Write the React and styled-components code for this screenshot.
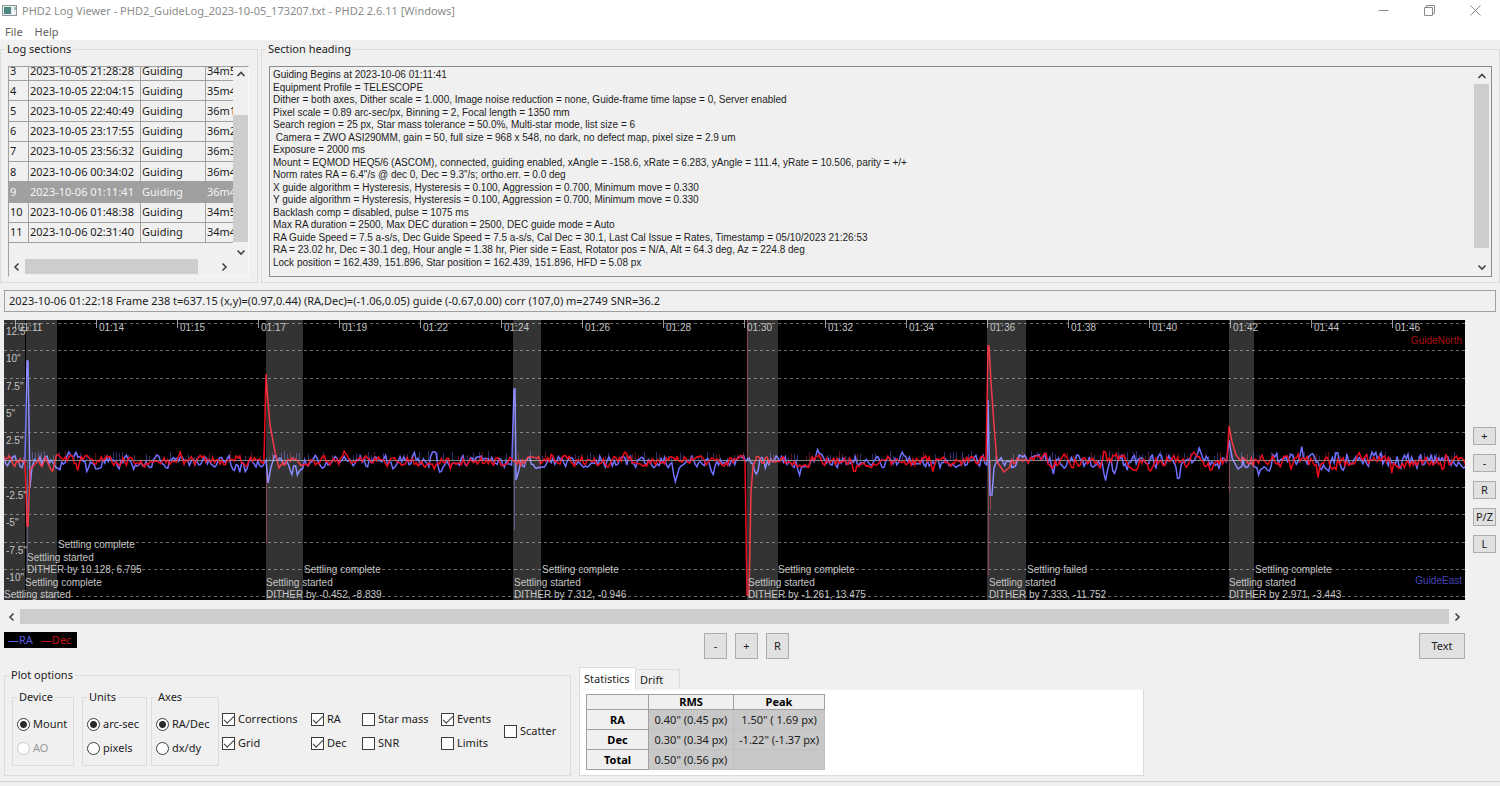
import styled, { createGlobalStyle } from 'styled-components';

const sections = [
    ['3', '2023-10-05 21:28:28', '34m5s'],
    ['4', '2023-10-05 22:04:15', '35m4s'],
    ['5', '2023-10-05 22:40:49', '36m1s'],
    ['6', '2023-10-05 23:17:55', '36m2s'],
    ['7', '2023-10-05 23:56:32', '36m3s'],
    ['8', '2023-10-06 00:34:02', '36m4s'],
    ['9', '2023-10-06 01:11:41', '36m4s'],
    ['10', '2023-10-06 01:48:38', '34m5s'],
    ['11', '2023-10-06 02:31:40', '34m4s'],
];

const heading = `Guiding Begins at 2023-10-06 01:11:41
Equipment Profile = TELESCOPE
Dither = both axes, Dither scale = 1.000, Image noise reduction = none, Guide-frame time lapse = 0, Server enabled
Pixel scale = 0.89 arc-sec/px, Binning = 2, Focal length = 1350 mm
Search region = 25 px, Star mass tolerance = 50.0%, Multi-star mode, list size = 6
 Camera = ZWO ASI290MM, gain = 50, full size = 968 x 548, no dark, no defect map, pixel size = 2.9 um
Exposure = 2000 ms
Mount = EQMOD HEQ5/6 (ASCOM), connected, guiding enabled, xAngle = -158.6, xRate = 6.283, yAngle = 111.4, yRate = 10.506, parity = +/+
Norm rates RA = 6.4"/s @ dec 0, Dec = 9.3"/s; ortho.err. = 0.0 deg
X guide algorithm = Hysteresis, Hysteresis = 0.100, Aggression = 0.700, Minimum move = 0.330
Y guide algorithm = Hysteresis, Hysteresis = 0.100, Aggression = 0.700, Minimum move = 0.330
Backlash comp = disabled, pulse = 1075 ms
Max RA duration = 2500, Max DEC duration = 2500, DEC guide mode = Auto
RA Guide Speed = 7.5 a-s/s, Dec Guide Speed = 7.5 a-s/s, Cal Dec = 30.1, Last Cal Issue = Rates, Timestamp = 05/10/2023 21:26:53
RA = 23.02 hr, Dec = 30.1 deg, Hour angle = 1.38 hr, Pier side = East, Rotator pos = N/A, Alt = 64.3 deg, Az = 224.8 deg
Lock position = 162.439, 151.896, Star position = 162.439, 151.896, HFD = 5.08 px`;

// ---- guide graph data ----
const ZERO = 140;
const times = ['01:11', '01:14', '01:15', '01:17', '01:19', '01:22', '01:24', '01:26', '01:28', '01:30', '01:32', '01:34', '01:36', '01:38', '01:40', '01:42', '01:44', '01:46'];
const gridLines = [['12.5"', 3], ['10"', 30], ['7.5"', 58], ['5"', 85], ['2.5"', 112], ['', 140], ['-2.5"', 167], ['-5"', 194], ['-7.5"', 222], ['-10"', 249], ['', 276]];
const settles = [[0, 21], [22, 31], [262, 37], [509, 28], [743, 31], [983, 39], [1225, 25]];
const events = [
    [54, 228, 'Settling complete'],
    [23, 241, 'Settling started'],
    [23, 253, 'DITHER by 10.128, 6.795'],
    [21, 266, 'Settling complete'],
    [0, 278, 'Settling started'],
    [300, 253, 'Settling complete'],
    [262, 266, 'Settling started'],
    [262, 278, 'DITHER by -0.452, -8.839'],
    [538, 253, 'Settling complete'],
    [510, 266, 'Settling started'],
    [510, 278, 'DITHER by 7.312, -0.946'],
    [774, 253, 'Settling complete'],
    [744, 266, 'Settling started'],
    [744, 278, 'DITHER by -1.261, 13.475'],
    [1023, 253, 'Settling failed'],
    [985, 266, 'Settling started'],
    [985, 278, 'DITHER by 7.333, -11.752'],
    [1251, 253, 'Settling complete'],
    [1225, 266, 'Settling started'],
    [1225, 278, 'DITHER by 2.971, -3.443'],
];

// exact stretches that replace the quiet signal: [x, y] runs
const raRuns = [
    [[21, 142], [23, 41], [24, 41], [26, 167], [28, 147], [30, 141]],
    [[262, 140], [264, 163], [267, 147], [270, 138]],
    [[508, 138], [510, 69], [511, 69], [512, 160], [515, 150], [517, 140]],
    [[983, 138], [984, 80], [986, 175], [988, 175], [990, 148], [993, 140]],
    [[1223, 140], [1225, 120], [1228, 138], [1234, 149], [1238, 146]],
];
const decRuns = [
    [[21, 141], [22, 170], [23, 206], [24, 206], [26, 150], [30, 145], [34, 141]],
    [[260, 140], [262, 54], [263, 70], [266, 105], [271, 132], [275, 148], [279, 142]],
    [[741, 142], [743, 275], [745, 275], [747, 172], [749, 146], [752, 140]],
    [[982, 140], [984, 26], [985, 26], [987, 62], [990, 105], [993, 142], [996, 146], [1000, 152], [1006, 147]],
    [[1223, 140], [1225, 106], [1228, 122], [1232, 135], [1237, 141]],
];
const raBumps = [[55, 9], [64, -5], [72, -6], [83, 9], [94, 9], [114, 8], [131, 7], [197, 9], [229, 12], [235, 12], [241, 11], [288, 10], [294, 12], [316, 6], [391, 8], [411, -7], [424, 7], [429, -10], [436, 9], [562, 6], [598, -5], [671, 16], [709, 12], [752, 9], [761, 8], [796, 12], [814, -8], [878, 8], [899, -6], [936, 6], [1011, 9], [1028, -4], [1049, 12], [1102, 13], [1111, 11], [1123, 9], [1174, 12], [1196, -6], [1256, 9], [1270, -11], [1289, -8], [1298, -8], [1332, -7], [1344, -5], [1371, -8], [1412, 7], [1447, 7], [1455, -4]];
const decBumps = [[48, 6], [55, -6], [74, 6], [154, 6], [177, -5], [233, -4], [311, 7], [341, -6], [431, 6], [447, 6], [548, -5], [599, -6], [620, -5], [632, 6], [850, 8], [929, 8], [1048, 9], [1100, -8], [1118, -7], [1148, 10], [1151, -9], [1170, -5], [1208, 6], [1288, 8], [1314, 13], [1388, 8], [1429, 8], [1439, 9], [1442, -8]];

function random(seed) {
    let s = seed;
    return () => {
        s = (s * 16807) % 2147483647;
        return s / 2147483647;
    };
}

function trace(seed, runs, bumps, amp, bias) {
    const rand = random(seed);
    const pts = [];
    let v = 0;
    for (let x = 0; x < 2400; x += 1.8) {
        // seeing gets rougher towards the end of the session
        const rough = x > 1040 ? 1.35 : 1;
        v = v * 0.4 + (rand() - 0.5) * amp * rough;
        if (runs.some(r => x >= r[0][0] && x <= r[r.length - 1][0])) continue;
        const bump = bumps.reduce((sum, [bx, h]) => sum + h * Math.max(0, 1 - Math.abs(x - bx) / 4), 0);
        pts.push([x, ZERO + bias + v + bump]);
    }
    runs.forEach(r => pts.push(...r));
    pts.sort((a, b) => a[0] - b[0]);
    return pts.map(([x, y]) => `${x.toFixed(1)},${y.toFixed(1)}`).join(' ');
}

function pulses(seed, density) {
    const rand = random(seed);
    let d = '';
    for (let x = 4; x < 2400; x += 3) {
        if (rand() < density) d += `M${x}.5 ${ZERO}v${-(3 + Math.round(rand() * 6))}`;
    }
    return d;
}

const raLine = trace(4211, raRuns, raBumps, 10, 1.5);
const decLine = trace(977, decRuns, decBumps, 9, 1);
const raPulses = pulses(31, 0.45);
const decPulses = pulses(58, 0.2);

const GuideGraph = () => (
    <Graph role="img" aria-label="Guide graph">
        {gridLines.map(([, y]) => (
            <line key={y} x1="0" x2="100%" y1={y + 0.5} y2={y + 0.5} stroke={y === ZERO ? '#777' : '#686868'} strokeDasharray={y === ZERO ? undefined : '3 3'} />
        ))}
        {times.map((t, i) => <line key={t} x1={11.5 + i * 81} x2={11.5 + i * 81} y1="0" y2="8" stroke="#999" />)}
        <path d={raPulses} stroke="#30306e" />
        <path d={decPulses} stroke="#5c1418" />
        <path d="M23.5 140V250M510.5 140V210" stroke="#34346e" />
        <path d="M262.5 140V223M743.5 140V0M984.5 140V255M986.5 140V190M1225.5 140V173" stroke="#6e1a24" />
        <polyline points={raLine} fill="none" stroke="#7070ff" strokeWidth="1.5" />
        <polyline points={decLine} fill="none" stroke="#ee0a1c" strokeWidth="1.5" />
        <line x1="0" x2="100%" y1="140.5" y2="140.5" stroke="#999" opacity="0.45" />
        {settles.map(([x, w]) => <rect key={x} x={x} y="0" width={w} height="280" fill="#fff" opacity="0.2" />)}
        {times.map((t, i) => <text key={t} x={14 + i * 81} y="11">{t}</text>)}
        {gridLines.map(([label, y]) => label && <text key={label} x="2" y={y + 12}>{label}</text>)}
        {events.map(([x, y, label]) => <text key={`${x}-${y}`} x={x} y={y}>{label}</text>)}
        <GraphNote x="100%" y="24" dx="-3" $color="#a80f14">GuideNorth</GraphNote>
        <GraphNote x="100%" y="264" dx="-3" $color="#4444b4">GuideEast</GraphNote>
    </Graph>
);

const Arrow = ({ dir }) => {
    const paths = {
        up: 'M1.5 6 5 2.5 8.5 6',
        down: 'M1.5 3.5 5 7 8.5 3.5',
        left: 'M6.5 1.5 3 5 6.5 8.5',
        right: 'M3.5 1.5 7 5 3.5 8.5',
    };
    return (
        <ArrowButton type="button" aria-label={`Scroll ${dir}`}>
            <svg width="10" height="10" fill="none" stroke="#444" strokeWidth="1.6"><path d={paths[dir]} /></svg>
        </ArrowButton>
    );
};

const Radio = ({ name, label, ...rest }) => (
    <Choice $disabled={rest.disabled}>
        <RadioInput type="radio" name={name} {...rest} />
        {label}
    </Choice>
);

const Check = ({ label, checked, tall }) => (
    <Choice $tall={tall}>
        <CheckInput type="checkbox" defaultChecked={checked} />
        {label}
    </Choice>
);

const App = () => (
    <>
        <GlobalStyle />
        <Window>
            <TitleBar>
                <svg width="16" height="14" viewBox="0 0 16 14">
                    <rect x="0.5" y="1.5" width="14" height="10" fill="#e8eeee" stroke="#8d9696" />
                    <rect x="2" y="3" width="7" height="7" fill="#4b8683" />
                    <path d="M11.5 3v7" stroke="#fff" />
                    <path d="M13 3v3" stroke="#5b8a88" />
                </svg>
                <Title>PHD2 Log Viewer - PHD2_GuideLog_2023-10-05_173207.txt - PHD2 2.6.11 [Windows]</Title>
                <WindowButton type="button" aria-label="Minimize">
                    <svg width="11" height="11" fill="none" stroke="#8c8c8c"><path d="M0.5 5.5h10" /></svg>
                </WindowButton>
                <WindowButton type="button" aria-label="Restore">
                    <svg width="11" height="11" fill="none" stroke="#8c8c8c"><path d="M0.5 2.5h8v8h-8zM2.5 2.5v-2h8v8h-2" /></svg>
                </WindowButton>
                <WindowButton type="button" aria-label="Close">
                    <svg width="11" height="11" fill="none" stroke="#8c8c8c"><path d="M0.5 0.5l10 10M10.5 0.5l-10 10" /></svg>
                </WindowButton>
            </TitleBar>
            <MenuBar>
                <MenuItem type="button">File</MenuItem>
                <MenuItem type="button">Help</MenuItem>
            </MenuBar>

            <TopRow>
                <Group>
                    <Legend>Log sections</Legend>
                    <LogBox>
                        <LogView>
                            <LogTable>
                                <colgroup>
                                    <LogCol $w={20} />
                                    <LogCol $w={112} />
                                    <LogCol $w={65} />
                                    <LogCol $w={60} />
                                </colgroup>
                                <tbody>
                                    {sections.map(([id, date, length]) => (
                                        <LogRow key={id} $selected={id === '9'}>
                                            <td>{id}</td>
                                            <td>{date}</td>
                                            <td>Guiding</td>
                                            <td>{length}</td>
                                        </LogRow>
                                    ))}
                                </tbody>
                            </LogTable>
                        </LogView>
                        <VScroll>
                            <Arrow dir="up" />
                            <Track><Thumb $before={33} $size={127} /></Track>
                            <Arrow dir="down" />
                        </VScroll>
                        <HScroll>
                            <Arrow dir="left" />
                            <Track $row><Thumb $before={0} $size={173} /></Track>
                            <Arrow dir="right" />
                        </HScroll>
                    </LogBox>
                </Group>
                <Group>
                    <Legend>Section heading</Legend>
                    <HeadingBox>
                        <HeadingText readOnly aria-label="Section heading" wrap="off" value={heading} />
                        <VScroll>
                            <Arrow dir="up" />
                            <Track><Thumb $before={0} $size={164} /></Track>
                            <Arrow dir="down" />
                        </VScroll>
                    </HeadingBox>
                </Group>
            </TopRow>

            <Readout>2023-10-06 01:22:18 Frame 238 t=637.15 (x,y)=(0.97,0.44) (RA,Dec)=(-1.06,0.05) guide (-0.67,0.00) corr (107,0) m=2749 SNR=36.2</Readout>

            <GraphRow>
                <GuideGraph />
                <SideButtons>
                    <PushButton type="button">+</PushButton>
                    <PushButton type="button">-</PushButton>
                    <PushButton type="button">R</PushButton>
                    <PushButton type="button">P/Z</PushButton>
                    <PushButton type="button">L</PushButton>
                </SideButtons>
            </GraphRow>

            <GraphScroll>
                <Arrow dir="left" />
                <Track $row><Thumb $before={0} /></Track>
                <Arrow dir="right" />
            </GraphScroll>

            <ZoomRow>
                <LineKey>
                    <KeyItem $color="#5a5ae0">—RA</KeyItem>
                    <KeyItem $color="#c81414">—Dec</KeyItem>
                </LineKey>
                <ZoomButtons>
                    <PushButton type="button" $tall>-</PushButton>
                    <PushButton type="button" $tall>+</PushButton>
                    <PushButton type="button" $tall>R</PushButton>
                </ZoomButtons>
                <PushButton type="button" $tall $wide>Text</PushButton>
            </ZoomRow>

            <BottomRow>
                <PlotOptions>
                    <Legend>Plot options</Legend>
                    <OptionsBody>
                        <RadioGroup $w={62} $after={8}>
                            <Legend $inset>Device</Legend>
                            <Radio name="device" label="Mount" defaultChecked />
                            <Radio name="device" label="AO" disabled />
                        </RadioGroup>
                        <RadioGroup $w={65} $after={4}>
                            <Legend $inset>Units</Legend>
                            <Radio name="units" label="arc-sec" defaultChecked />
                            <Radio name="units" label="pixels" />
                        </RadioGroup>
                        <RadioGroup $w={68} $after={4}>
                            <Legend $inset>Axes</Legend>
                            <Radio name="axes" label="RA/Dec" defaultChecked />
                            <Radio name="axes" label="dx/dy" />
                        </RadioGroup>
                        <Checks>
                            <Check label="Corrections" checked />
                            <Check label="RA" checked />
                            <Check label="Star mass" />
                            <Check label="Events" checked />
                            <Check label="Scatter" tall />
                            <Check label="Grid" checked />
                            <Check label="Dec" checked />
                            <Check label="SNR" />
                            <Check label="Limits" />
                        </Checks>
                    </OptionsBody>
                </PlotOptions>
                <Notebook>
                    <Tabs role="tablist">
                        <Tab type="button" role="tab" aria-selected="true" $active>Statistics</Tab>
                        <Tab type="button" role="tab" aria-selected="false">Drift</Tab>
                    </Tabs>
                    <TabPanel role="tabpanel">
                        <StatsTable>
                            <thead>
                                <tr><th></th><th>RMS</th><th>Peak</th></tr>
                            </thead>
                            <tbody>
                                <tr><th>RA</th><td>0.40" (0.45 px)</td><td>1.50" ( 1.69 px)</td></tr>
                                <tr><th>Dec</th><td>0.30" (0.34 px)</td><td>-1.22" (-1.37 px)</td></tr>
                                <tr><th>Total</th><td>0.50" (0.56 px)</td><td></td></tr>
                            </tbody>
                        </StatsTable>
                    </TabPanel>
                </Notebook>
            </BottomRow>
            <StatusBar />
        </Window>
    </>
);

export default App;


//styled-components

const GlobalStyle = createGlobalStyle`
    * {
        box-sizing: border-box;
    }
    body {
        margin: 0;
        background: #f0f0f0;
        color: #1c1c1c;
        font-family: "Noto Sans", "Open Sans", sans-serif;
        font-size: 11px;
        line-height: 16px;
    }
    button, input, textarea {
        margin: 0;
        font: inherit;
        color: inherit;
    }
    svg {
        display: block;
    }
`

const Window = styled.div`
    display: flex;
    flex-direction: column;
    min-height: 100vh;
`

const TitleBar = styled.header`
    display: flex;
    align-items: center;
    height: 21px;
    padding-left: 2px;
    background: #fff;
    color: #8c8c8c;
`

const Title = styled.span`
    flex: 1;
    margin-left: 4px;
    white-space: nowrap;
`

const WindowButton = styled.button`
    display: grid;
    place-items: center;
    width: 46px;
    height: 20px;
    padding: 0;
    border: 0;
    background: none;
    &:last-child {
        margin-right: 2px;
    }
`

const MenuBar = styled.nav`
    display: flex;
    gap: 12px;
    height: 19px;
    padding: 3px 5px 0;
    background: #fff;
`

const MenuItem = styled.button`
    padding: 0;
    border: 0;
    background: none;
    color: #606060;
    line-height: 16px;
`

const TopRow = styled.div`
    display: grid;
    grid-template-columns: 258px 1fr;
    gap: 3px;
    padding-top: 1px;
`

const Group = styled.fieldset`
    min-width: 0;
    margin: 0;
    padding: 9px 7px 5px;
    border: 1px solid #dcdcdc;
    &:first-child {
        padding-right: 8px;
    }
`

const Legend = styled.legend`
    margin-left: ${({ $inset }) => $inset ? '0' : '-3px'};
    padding: 0 2px;
`

const LogBox = styled.div`
    display: grid;
    grid-template-columns: 1fr 15px;
    grid-template-rows: 1fr 17px;
    height: 211px;
    border: 1px solid #a0a0a0;
    border-right-color: #f8f8f8;
    border-bottom-color: #f8f8f8;
`

const LogView = styled.div`
    overflow: hidden;
`

const LogTable = styled.table`
    table-layout: fixed;
    width: 257px;
    height: 182px;
    margin-top: -6px;
    border-collapse: separate;
    border-spacing: 0;
    td {
        padding: 0 0 0 1px;
        border-right: 1px solid #a0a0a0;
        border-bottom: 1px solid #a0a0a0;
        white-space: nowrap;
    }
`

const LogCol = styled.col`
    width: ${({ $w }) => $w}px;
`

const LogRow = styled.tr`
    background: ${({ $selected }) => $selected ? '#a0a0a0' : 'none'};
    color: ${({ $selected }) => $selected ? '#f4f4f4' : 'inherit'};
`

const VScroll = styled.div`
    display: flex;
    flex-direction: column;
    width: 15px;
`

const HScroll = styled.div`
    grid-column: 1 / -1;
    display: flex;
    align-items: stretch;
    padding: 0 16px 2px 0;
`

const ArrowButton = styled.button`
    display: grid;
    place-items: center;
    flex: none;
    width: 16px;
    height: 15px;
    padding: 0;
    border: 0;
    background: none;
`

const Track = styled.div`
    display: flex;
    flex-direction: ${({ $row }) => $row ? 'row' : 'column'};
    flex: 1;
`

const Thumb = styled.div`
    flex: ${({ $size }) => $size ? `0 0 ${$size}px` : 1};
    margin-top: ${({ $before }) => $before}px;
    background: #cdcdcd;
`

const HeadingBox = styled.div`
    display: flex;
    height: 211px;
    padding: 2px;
    border: 1px solid #8c8c8c;
`

const HeadingText = styled.textarea`
    flex: 1;
    padding: 0 1px;
    border: 0;
    outline: 0;
    resize: none;
    overflow: hidden;
    background: none;
    font-family: "Liberation Sans", Arial, sans-serif;
    font-size: 10px;
    line-height: 1.25;
`

const Readout = styled.output`
    display: block;
    height: 22px;
    margin: 7px 4px 0;
    padding: 2px 4px;
    border: 1px solid #a0a0a0;
    white-space: nowrap;
    overflow: hidden;
`

const GraphRow = styled.div`
    display: flex;
    gap: 8px;
    margin-top: 8px;
    padding: 0 4px;
`

const Graph = styled.svg`
    flex: 1;
    min-width: 0;
    height: 280px;
    background: #000;
    text {
        fill: #c4c4c4;
        font-family: "Liberation Sans", Arial, sans-serif;
        font-size: 10px;
    }
`

const GraphNote = styled.text`
    text-anchor: end;
    && {
        fill: ${({ $color }) => $color};
    }
`

const SideButtons = styled.div`
    display: flex;
    flex-direction: column;
    gap: 9px;
    padding-top: 107px;
`

const PushButton = styled.button`
    width: ${({ $wide }) => $wide ? '46px' : '23px'};
    height: ${({ $tall }) => $tall ? '26px' : '18px'};
    padding: 0;
    border: 1px solid #adadad;
    background: #e1e1e1;
    line-height: 16px;
`

const GraphScroll = styled.div`
    display: flex;
    margin: 9px 35px 0 4px;
`

const ZoomRow = styled.div`
    display: grid;
    grid-template-columns: 1fr auto 1fr;
    margin-top: 8px;
    padding: 0 35px 0 4px;
    > :last-child {
        justify-self: end;
        margin-top: 1px;
    }
`

const LineKey = styled.div`
    display: flex;
    gap: 8px;
    justify-self: start;
    width: 73px;
    height: 16px;
    padding-left: 4px;
    background: #000;
    white-space: nowrap;
`

const KeyItem = styled.span`
    color: ${({ $color }) => $color};
`

const ZoomButtons = styled.div`
    display: flex;
    gap: 8px;
    margin: 1px 0 0 24px;
`

const BottomRow = styled.div`
    display: flex;
    gap: 8px;
    margin-top: 8px;
    padding: 0 4px;
`

const PlotOptions = styled.fieldset`
    flex: 0 0 567px;
    min-width: 0;
    height: 109px;
    margin: 0;
    padding: 6px 7px 0;
    border: 1px solid #dcdcdc;
    > legend {
        margin-left: -3px;
    }
`

const OptionsBody = styled.div`
    display: flex;
    align-items: flex-start;
`

const RadioGroup = styled.fieldset`
    flex: none;
    width: ${({ $w }) => $w}px;
    height: 77px;
    min-width: 0;
    margin: 0 ${({ $after }) => $after}px 0 0;
    padding: 7px 0 0 4px;
    border: 1px solid #dcdcdc;
`

const Choice = styled.label`
    display: flex;
    align-items: center;
    gap: 3px;
    height: 24px;
    white-space: nowrap;
    color: ${({ $disabled }) => $disabled ? '#989898' : 'inherit'};
    ${({ $tall }) => $tall && 'grid-row: span 2; align-self: center;'}
`

const RadioInput = styled.input`
    appearance: none;
    flex: none;
    width: 13px;
    height: 13px;
    border: 1px solid #3c3c3c;
    border-radius: 50%;
    background: #fff;
    &:checked {
        background: radial-gradient(circle, #2a2a2a 0 3px, #fff 4px);
    }
    &:disabled {
        border-color: #c8c8c8;
    }
`

const CheckInput = styled.input`
    appearance: none;
    display: grid;
    place-items: center;
    flex: none;
    width: 13px;
    height: 13px;
    border: 1px solid #3c3c3c;
    background: #fff;
    &:checked::after {
        content: '';
        width: 9px;
        height: 4px;
        margin-bottom: 2px;
        border: solid #3c3c3c;
        border-width: 0 0 1px 1px;
        transform: rotate(-45deg);
    }
`

const Checks = styled.div`
    display: grid;
    grid-template-columns: 89px 51px 79px 63px auto;
    margin-left: -1px;
    padding-top: 18px;
`

const Notebook = styled.div`
    display: flex;
    flex-direction: column;
    flex: 0 1 565px;
    height: 109px;
`

const Tabs = styled.div`
    display: flex;
    align-items: flex-end;
    height: 22px;
`

const Tab = styled.button`
    width: ${({ $active }) => $active ? '57px' : '44px'};
    height: ${({ $active }) => $active ? '22px' : '20px'};
    padding: 0 4px;
    border: 1px solid #dcdcdc;
    border-bottom: 0;
    border-left-width: ${({ $active }) => $active ? '1px' : '0'};
    background: ${({ $active }) => $active ? '#fff' : '#f0f0f0'};
    text-align: left;
`

const TabPanel = styled.div`
    flex: 1;
    padding: 4px 6px;
    border: 1px solid #dcdcdc;
    border-top-color: #f4f4f4;
    background: #fff;
`

const StatsTable = styled.table`
    width: 238px;
    table-layout: fixed;
    border-collapse: collapse;
    th, td {
        height: 20px;
        padding: 0;
        text-align: center;
        white-space: nowrap;
    }
    th {
        border: 1px solid #a0a0a0;
        background: #f0f0f0;
        color: #000;
    }
    td {
        border: 1px solid #c0c0c0;
        background: #c8c8c8;
    }
    thead th {
        height: 15px;
        line-height: 14px;
        width: 91px;
    }
    thead th:first-child {
        width: 62px;
    }
    thead th:nth-child(2) {
        width: 85px;
    }
`

const StatusBar = styled.footer`
    flex: 1;
    margin-top: 5px;
    border-top: 1px solid #d4d4d4;
`
